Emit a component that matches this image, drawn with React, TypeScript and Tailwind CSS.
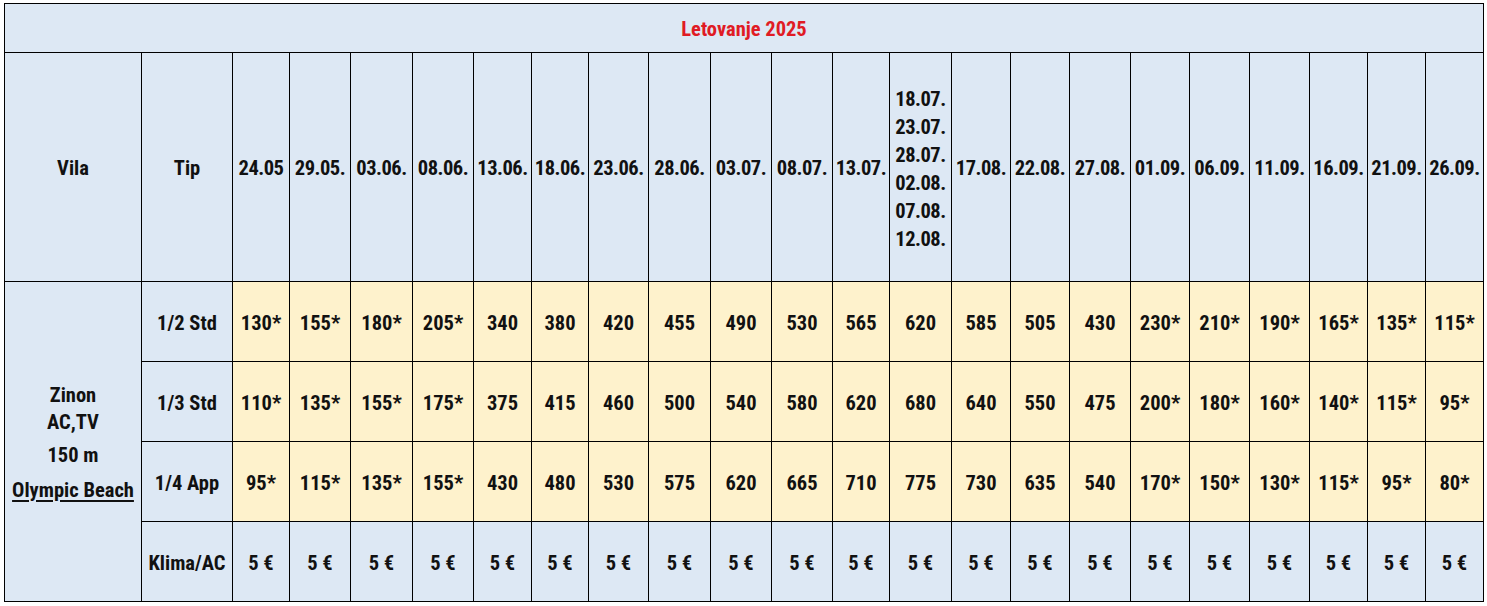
import React from "react";

const dates: (string | string[])[] = [
  "24.05",
  "29.05.",
  "03.06.",
  "08.06.",
  "13.06.",
  "18.06.",
  "23.06.",
  "28.06.",
  "03.07.",
  "08.07.",
  "13.07.",
  ["18.07.", "23.07.", "28.07.", "02.08.", "07.08.", "12.08."],
  "17.08.",
  "22.08.",
  "27.08.",
  "01.09.",
  "06.09.",
  "11.09.",
  "16.09.",
  "21.09.",
  "26.09.",
];

const rows: { tip: string; vals: string[]; yellow: boolean }[] = [
  {
    tip: "1/2 Std",
    yellow: true,
    vals: ["130*", "155*", "180*", "205*", "340", "380", "420", "455", "490", "530", "565", "620", "585", "505", "430", "230*", "210*", "190*", "165*", "135*", "115*"],
  },
  {
    tip: "1/3 Std",
    yellow: true,
    vals: ["110*", "135*", "155*", "175*", "375", "415", "460", "500", "540", "580", "620", "680", "640", "550", "475", "200*", "180*", "160*", "140*", "115*", "95*"],
  },
  {
    tip: "1/4 App",
    yellow: true,
    vals: ["95*", "115*", "135*", "155*", "430", "480", "530", "575", "620", "665", "710", "775", "730", "635", "540", "170*", "150*", "130*", "115*", "95*", "80*"],
  },
  {
    tip: "Klima/AC",
    yellow: false,
    vals: Array.from({ length: 21 }, () => "5 €"),
  },
];

const cell = "flex items-center justify-center text-center";
const blue = "bg-[#dde8f4]";
const yellow = "bg-[#fef2cc]";

export default function App() {
  return (
    <div className="w-[1487px] h-[606px] bg-white pt-[3px] pl-[4px] font-['Roboto','Liberation_Sans',sans-serif] font-stretch-condensed font-bold text-[20.5px] text-[#111]">
      <div className="grid w-fit bg-black p-px gap-px grid-cols-[136px_90px_56px_60px_61px_60px_57px_56px_59px_61px_60px_60px_56px_61px_58px_58px_60px_58px_59px_59px_57px_57px_57px] grid-rows-[48px_228px_79px_79px_79px_79px]">
        <div className={`${cell} ${blue} col-span-full text-[#e01b24] pt-[3px]`}>Letovanje 2025</div>
        <div className={`${cell} ${blue} pt-[2px]`}>Vila</div>
        <div className={`${cell} ${blue} pt-[2px]`}>Tip</div>
        {dates.map((d, i) =>
          Array.isArray(d) ? (
            <div key={i} className={`${cell} ${blue} flex-col leading-[28px] pt-[3px] tracking-[-0.5px]`}>
              {d.map((x) => (
                <div key={x}>{x}</div>
              ))}
            </div>
          ) : (
            <div key={i} className={`${cell} ${blue} pt-[3px] tracking-[-0.5px]`}>
              {d}
            </div>
          )
        )}
        <div className={`${cell} ${blue} row-span-4 flex-col pt-[3px]`}>
          <div className="leading-[27px]">Zinon</div>
          <div className="leading-[27px]">AC,TV</div>
          <div className="leading-[27px] mt-[6px]">150 m</div>
          <div className="leading-[27px] mt-[8px] whitespace-nowrap underline underline-offset-[3px] decoration-[1.5px]">Olympic Beach</div>
        </div>
        {rows.map((r) => (
          <React.Fragment key={r.tip}>
            <div className={`${cell} ${blue} pt-[3px]`}>{r.tip}</div>
            {r.vals.map((v, j) => (
              <div key={j} className={`${cell} ${r.yellow ? yellow : blue} pt-[3px]`}>
                {v}
              </div>
            ))}
          </React.Fragment>
        ))}
      </div>
    </div>
  );
}
